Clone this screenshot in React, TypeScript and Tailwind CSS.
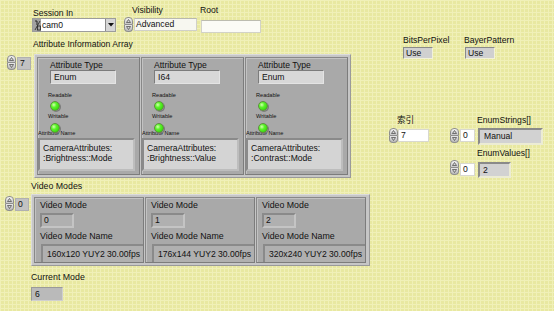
import React from "react";

function Spinner({ className = "" }: { className?: string }) {
  return (
    <div className={`flex flex-col w-[9px] h-[15px] shrink-0 ${className}`}>
      <div className="flex-1 rounded-t-[4px] border border-[#8e8e8e] bg-gradient-to-b from-[#f4f4f4] to-[#c8c8c8] flex items-center justify-center">
        <svg width="5" height="4" viewBox="0 0 5 4">
          <path d="M2.5 0.5 L4.5 3.5 L0.5 3.5 Z" fill="#d8d8d8" stroke="#555" strokeWidth="0.8" />
        </svg>
      </div>
      <div className="flex-1 rounded-b-[4px] border border-t-0 border-[#8e8e8e] bg-gradient-to-b from-[#e8e8e8] to-[#b8b8b8] flex items-center justify-center">
        <svg width="5" height="4" viewBox="0 0 5 4">
          <path d="M0.5 0.5 L4.5 0.5 L2.5 3.5 Z" fill="#d8d8d8" stroke="#555" strokeWidth="0.8" />
        </svg>
      </div>
    </div>
  );
}

function Label({ children, className = "" }: { children: React.ReactNode; className?: string }) {
  return <div className={`text-[8.6px] leading-[10px] text-[#111] whitespace-nowrap ${className}`}>{children}</div>;
}

function Tiny({ children, className = "" }: { children: React.ReactNode; className?: string }) {
  return <div className={`text-[5.6px] leading-[6px] text-[#111] whitespace-nowrap ${className}`}>{children}</div>;
}

function Led({ className = "" }: { className?: string }) {
  return (
    <div
      className={`relative z-10 w-[10px] h-[10px] rounded-full border border-[#5f8f3f] bg-[radial-gradient(circle_at_35%_35%,#d4ffb0_0%,#5cf52a_35%,#26c400_100%)] shadow-[1px_1px_0_#7a7a7a] ${className}`}
    />
  );
}

const sunken = "border border-t-[#7c7c7c] border-l-[#7c7c7c] border-b-[#e4e4e4] border-r-[#e4e4e4]";

function AttrCell({ type, line2 }: { type: string; line2: string }) {
  return (
    <div className="w-[103px] h-[118px] bg-[#a9a9a9] border border-t-[#888] border-l-[#888] border-b-[#7c7c7c] border-r-[#7c7c7c] shadow-[inset_1px_1px_0_#c2c2c2] flex flex-col overflow-hidden">
      <Label className="ml-[12px] mt-[2px]">Attribute Type</Label>
      <div className={`ml-[12px] w-[66px] h-[14px] bg-[#d8d8d8] ${sunken} text-[8.6px] leading-[12px] pl-[3px]`}>{type}</div>
      <Tiny className="ml-[10px] mt-[8px]">Readable</Tiny>
      <Led className="ml-[12px] mt-[3px]" />
      <Tiny className="ml-[10px] mt-[2px]">Writable</Tiny>
      <Led className="ml-[12px] mt-[4px]" />
      <Tiny className="ml-[0px] -mt-[3px]">Attribute Name</Tiny>
      <div className={`ml-[0px] mt-[2px] w-[97px] h-[33px] bg-[#d4d4d4] border-2 border-t-[#8a8a8a] border-l-[#8a8a8a] border-b-[#bdbdbd] border-r-[#bdbdbd] text-[8.6px] leading-[10px] pl-[3px] pt-[3px]`}>
        <div>CameraAttributes:</div>
        <div>{line2}</div>
      </div>
    </div>
  );
}

function VideoCell({ idx, name }: { idx: string; name: string }) {
  return (
    <div className="w-[110px] h-[66px] bg-[#a9a9a9] border border-t-[#888] border-l-[#888] border-b-[#7c7c7c] border-r-[#7c7c7c] shadow-[inset_1px_1px_0_#c2c2c2] flex flex-col overflow-hidden">
      <Label className="ml-[5px] mt-[2px] text-[8.8px]">Video Mode</Label>
      <div className={`ml-[5px] mt-[3px] w-[34px] h-[15px] bg-[#b0b0b0] border-2 border-t-[#8a8a8a] border-l-[#8a8a8a] border-b-[#c4c4c4] border-r-[#c4c4c4] text-[8.6px] leading-[11px] pl-[2px]`}>{idx}</div>
      <Label className="ml-[5px] mt-[3px] text-[8.8px]">Video Mode Name</Label>
      <div className="ml-[6px] mt-[3px] w-[104px] h-[24px] shrink-0 bg-[#b0b0b0] border-2 border-t-[#8a8a8a] border-l-[#8a8a8a] border-b-[#c4c4c4] border-r-[#c4c4c4] text-[8.6px] leading-[14px] pl-[4px] pt-[1px]">{name}</div>
    </div>
  );
}

export default function App() {
  return (
    <div className="w-[554px] h-[311px] overflow-hidden font-['Liberation_Sans',Arial,'Noto_Sans_CJK_SC',sans-serif] text-[#111] bg-[#e8e8a1] bg-[linear-gradient(to_right,#f0f0b8_1px,transparent_1px),linear-gradient(to_bottom,#f0f0b8_1px,transparent_1px)] bg-[size:4px_4px] flex flex-col">
      {/* top row */}
      <div className="flex h-[33px] shrink-0">
        <div className="ml-[32px] mt-[8px] flex flex-col">
          <Label className="ml-[1px]">Session In</Label>
          <div className="flex w-[84px] h-[14px] border border-[#9c9c9c] bg-white">
            <div className="w-[8px] h-full bg-[#a2a2a2] flex items-center justify-center">
              <svg width="7" height="11" viewBox="0 0 7 11">
                <path d="M1 1 L3 1 L3 5" stroke="#222" strokeWidth="1" fill="none" />
                <path d="M6 1 L1 10" stroke="#222" strokeWidth="0.8" />
                <rect x="3.5" y="6" width="3" height="4" fill="none" stroke="#222" strokeWidth="0.8" />
              </svg>
            </div>
            <div className="flex-1 text-[8.6px] leading-[12px] pl-[1px]">cam0</div>
            <div className="w-[10px] h-full bg-[#d6d6d6] border-l border-[#8a8a8a] flex items-center justify-center">
              <svg width="6" height="4" viewBox="0 0 6 4"><path d="M0 0 L6 0 L3 3.5 Z" fill="#111" /></svg>
            </div>
          </div>
        </div>
        <div className="ml-[8px] mt-[5px] flex flex-col">
          <Label className="ml-[8px]">Visibility</Label>
          <div className="mt-[2px] flex items-center">
            <Spinner />
            <div className="ml-[1px] w-[63px] h-[13px] bg-[#f7f7f0] border border-[#d0d0c8] border-t-[#b8b8b0] text-[8.6px] leading-[11px] pl-[1px]">Advanced</div>
          </div>
        </div>
        <div className="ml-[3px] mt-[5px] flex flex-col">
          <Label>Root</Label>
          <div className="ml-[1px] mt-[5px] w-[60px] h-[13px] bg-[#fbfbf6] border border-[#d2d2c8] border-t-[#bcbcb0]" />
        </div>
      </div>

      {/* main */}
      <div className="flex flex-1">
        {/* left column */}
        <div className="w-[370px] flex flex-col shrink-0">
          <Label className="ml-[33px] mt-[6px]">Attribute Information Array</Label>
          <div className="mt-[5px] flex items-start">
            <Spinner className="ml-[7px] mt-[1px]" />
            <div className="ml-[1px] mt-[3px] w-[14px] h-[13px] bg-[#c2c2c2] border border-[#b0b0b0] text-[8.6px] leading-[11px] pl-[2px]">7</div>
            <div className="ml-[3px] w-[317px] h-[124px] bg-[#c6c6c6] border border-t-[#dcdcdc] border-l-[#dcdcdc] border-b-[#9a9a9a] border-r-[#9a9a9a] p-[2px] flex gap-[1px]">
              <AttrCell type="Enum" line2=":Brightness::Mode" />
              <AttrCell type="I64" line2=":Brightness::Value" />
              <AttrCell type="Enum" line2=":Contrast::Mode" />
            </div>
          </div>

          <Label className="ml-[31px] mt-[3px] text-[8.8px]">Video Modes</Label>
          <div className="mt-[3px] flex items-start">
            <Spinner className="ml-[5px] mt-[2px]" />
            <div className="ml-[1px] mt-[4px] w-[14px] h-[13px] bg-[#c2c2c2] border border-[#b0b0b0] text-[8.6px] leading-[11px] pl-[2px]">0</div>
            <div className="ml-[2px] w-[339px] h-[72px] bg-[#c6c6c6] border border-t-[#dcdcdc] border-l-[#dcdcdc] border-b-[#9a9a9a] border-r-[#9a9a9a] p-[2px] flex gap-[1px]">
              <VideoCell idx="0" name="160x120 YUY2 30.00fps" />
              <VideoCell idx="1" name="176x144 YUY2 30.00fps" />
              <VideoCell idx="2" name="320x240 YUY2 30.00fps" />
            </div>
          </div>

          <Label className="ml-[31px] mt-[6px] text-[8.8px]">Current Mode</Label>
          <div className="ml-[31px] mt-[5px] w-[32px] h-[14px] bg-[#bababa] border border-t-[#9a9a9a] border-l-[#9a9a9a] border-b-[#d0d0d0] border-r-[#d0d0d0] text-[8.6px] leading-[12px] pl-[3px]">6</div>
        </div>

        {/* right column */}
        <div className="ml-[19px] flex flex-col">
          <div className="mt-[2px] ml-[14px] flex">
            <div className="w-[61px] flex flex-col">
              <Label>BitsPerPixel</Label>
              <div className={`mt-[2px] w-[30px] h-[12px] bg-[#d0d0d0] border border-t-[#8a8a8a] border-l-[#8a8a8a] border-b-[#f2f2d8] border-r-[#f2f2d8] text-[8.6px] leading-[10px] pl-[2px]`}>Use</div>
            </div>
            <div className="flex flex-col">
              <Label>BayerPattern</Label>
              <div className={`ml-[1px] mt-[2px] w-[30px] h-[12px] bg-[#d0d0d0] border border-t-[#8a8a8a] border-l-[#8a8a8a] border-b-[#f2f2d8] border-r-[#f2f2d8] text-[8.6px] leading-[10px] pl-[2px]`}>Use</div>
            </div>
          </div>

          <div className="mt-[56px] flex items-start">
            <div className="flex flex-col">
              <Label className="ml-[8px]">索引</Label>
              <div className="mt-[3px] flex items-start">
                <Spinner />
                <div className="ml-[0px] mt-[1px] w-[31px] h-[13px] bg-white border border-[#d8d8d0] text-[8.6px] leading-[11px] pl-[2px]">7</div>
              </div>
            </div>

            <div className="ml-[21px] flex flex-col">
              <div className="flex items-end">
                <div className="flex items-start mb-[2px]">
                  <Spinner />
                  <div className="ml-[1px] mt-[1px] w-[15px] h-[13px] bg-white border border-[#d8d8d0] text-[8.6px] leading-[11px] pl-[2px]">0</div>
                </div>
                <div className="ml-[3px] flex flex-col">
                  <Label className="-ml-[1px]">EnumStrings[]</Label>
                  <div className="mt-[3px] w-[65px] h-[17px] bg-[#d2d2d2] border-2 border-t-[#8a8a8a] border-l-[#8a8a8a] border-b-[#ececd4] border-r-[#ececd4] text-[8.6px] leading-[13px] pl-[4px]">Manual</div>
                </div>
              </div>
              <div className="mt-[3px] flex items-end">
                <div className="flex items-start mb-[2px]">
                  <Spinner />
                  <div className="ml-[1px] mt-[3px] w-[15px] h-[13px] bg-white border border-[#d8d8d0] text-[8.6px] leading-[11px] pl-[2px]">0</div>
                </div>
                <div className="ml-[3px] flex flex-col">
                  <Label className="-ml-[1px]">EnumValues[]</Label>
                  <div className="mt-[4px] w-[33px] h-[16px] bg-[#d2d2d2] border-2 border-t-[#8a8a8a] border-l-[#8a8a8a] border-b-[#ececd4] border-r-[#ececd4] text-[8.6px] leading-[12px] pl-[3px]">2</div>
                </div>
              </div>
            </div>
          </div>
        </div>
      </div>
    </div>
  );
}
